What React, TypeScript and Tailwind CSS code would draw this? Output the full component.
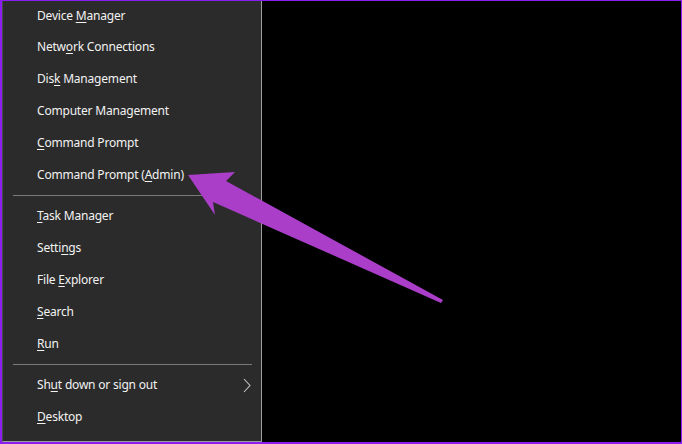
import React from "react";

type Item = { pre: string; key?: string; post?: string; chevron?: boolean };

const group1: Item[] = [
  { pre: "Device ", key: "M", post: "anager" },
  { pre: "Netw", key: "o", post: "rk Connections" },
  { pre: "Dis", key: "k", post: " Management" },
  { pre: "Computer Management" },
  { pre: "", key: "C", post: "ommand Prompt" },
  { pre: "Command Prompt (", key: "A", post: "dmin)" },
];
const group2: Item[] = [
  { pre: "", key: "T", post: "ask Manager" },
  { pre: "Setti", key: "n", post: "gs" },
  { pre: "File ", key: "E", post: "xplorer" },
  { pre: "", key: "S", post: "earch" },
  { pre: "", key: "R", post: "un" },
];
const group3: Item[] = [
  { pre: "Sh", key: "u", post: "t down or sign out", chevron: true },
  { pre: "", key: "D", post: "esktop" },
];

function Row({ item, first }: { item: Item; first?: boolean }) {
  return (
    <div
      className={`relative flex items-center pl-[34px] text-[12px] tracking-[-0.2px] text-[#f2f2f2] ${
        first ? "h-[30px]" : "h-[32px]"
      }`}
    >
      <span className="whitespace-pre leading-none">
        {item.pre}
        {item.key && (
          <span className="underline decoration-1 underline-offset-[2px]">{item.key}</span>
        )}
        {item.post}
      </span>
      {item.chevron && (
        <svg
          className="absolute right-[10px] top-[9px]"
          width="8"
          height="15"
          viewBox="0 0 8 15"
          fill="none"
        >
          <path d="M1 1 L7 7.5 L1 14" stroke="#c4c4c4" strokeWidth="1.1" />
        </svg>
      )}
    </div>
  );
}

function Sep() {
  return <div className="my-[4px] ml-[10px] mr-[9px] h-px bg-[#7a7a7a]" />;
}

export default function App() {
  return (
    <div
      className="relative box-border flex h-[444px] w-[682px] overflow-hidden border-t border-r border-b-2 border-l-2 border-[#8a1ef2] bg-black"
      style={{ fontFamily: '"Noto Sans", "Open Sans", sans-serif' }}
    >
      <div className="flex w-[260px] flex-col border-r border-b border-l border-r-[#9c9c9c] border-b-[#9c9c9c] border-l-[#4a4a4a] bg-[#2b2b2b]">
        {group1.map((it, i) => (
          <Row key={i} item={it} first={i === 0} />
        ))}
        <Sep />
        {group2.map((it, i) => (
          <Row key={i} item={it} />
        ))}
        <Sep />
        {group3.map((it, i) => (
          <Row key={i} item={it} />
        ))}
      </div>
      <div className="flex-1" />
      <svg
        className="pointer-events-none absolute left-[-2px] top-[-1px]"
        width="682"
        height="444"
        viewBox="0 0 682 444"
      >
        <polygon
          points="188,175 235,172 226,181 443,300 441,303 213,202 215,215"
          fill="#aa3ec9"
        />
      </svg>
    </div>
  );
}
